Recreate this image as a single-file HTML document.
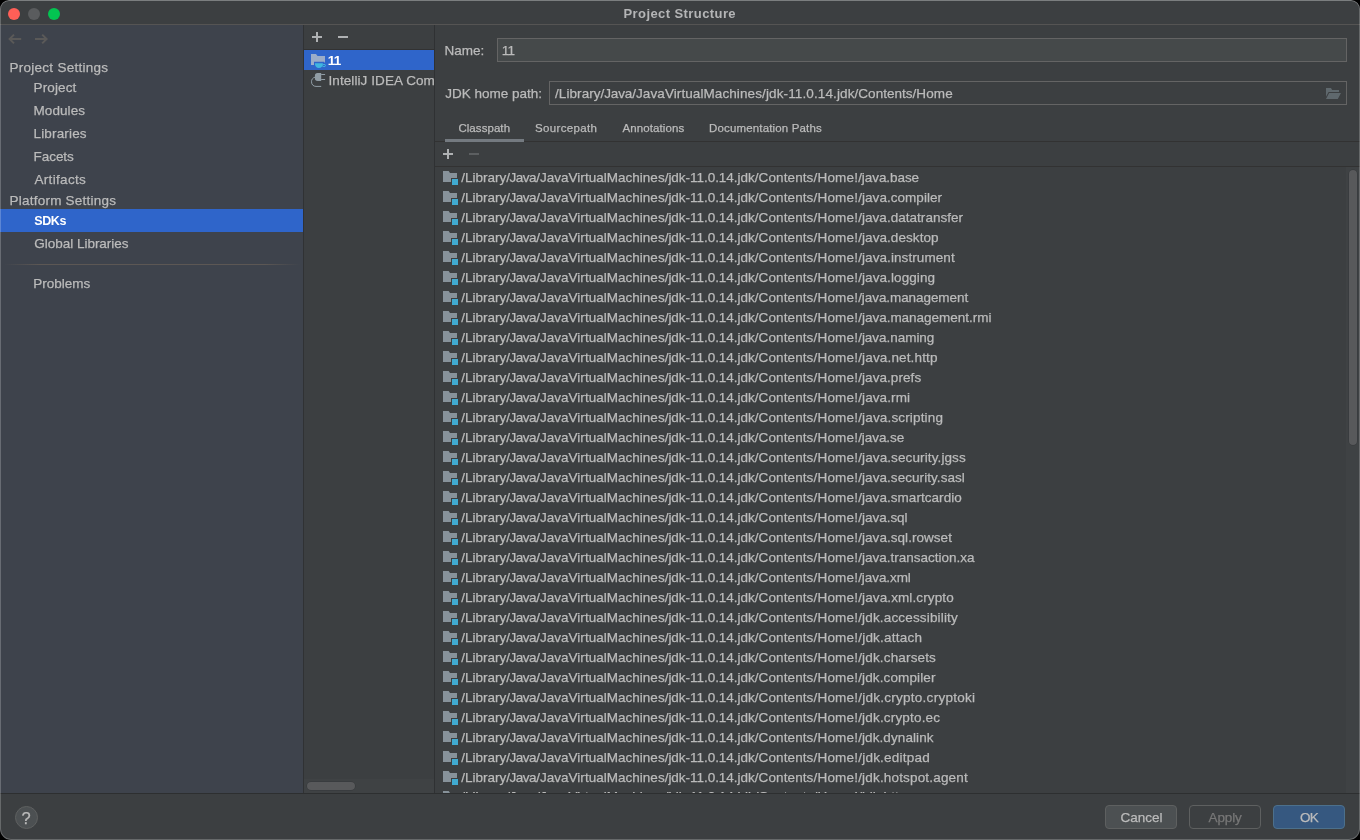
<!DOCTYPE html>
<html><head><meta charset="utf-8"><title>Project Structure</title>
<style>
*{box-sizing:border-box;margin:0;padding:0}
html,body{width:1360px;height:840px;overflow:hidden;background:#000}
body{font-family:"Liberation Sans",sans-serif;font-size:13.5px;color:#bbbbbb;position:relative;-webkit-text-stroke:.25px}
.win{position:absolute;left:0;top:0;width:1360px;height:840px;background:#3c3f41;border-radius:9px 9px 11px 11px;overflow:hidden;will-change:transform}
.abs{position:absolute}
.tx{position:absolute;white-space:pre;top:0}
.title{-webkit-text-stroke:0;font-size:13px;left:0;top:2px;width:1360px;height:23px;line-height:23px;font-weight:bold;color:#b4b5b6}
.tsep{left:0;top:24px;width:1360px;height:1px;background:#555453}
.dot{width:12px;height:12px;border-radius:50%;top:8px}
.sidebar{left:0;top:25px;width:304px;height:768px;background:#3e434c}
.sitem{left:0;width:304px;height:23px;line-height:23px}
.sel{background:#2f65ca;color:#fff}
.mid{left:304px;top:25px;width:130px;height:768px;background:#3c3f41;overflow:hidden}
.field{height:24px;border:1px solid #646464;line-height:22px;overflow:hidden}
.row{position:absolute;left:0;height:20px;width:900px;line-height:20px}
.fi{position:absolute;left:7px;top:2px;width:16px;height:16px}
.row span,.field span{position:absolute;top:1px;line-height:20px;white-space:pre}
.field span{top:1px;line-height:22px}
.last span{top:0}
.p0{left:26.2px;letter-spacing:-0.002px}
.p1{left:71.2px;letter-spacing:-0.456px}
.p2{left:101.2px;letter-spacing:0.021px}
.p3{left:229.7px;letter-spacing:-0.035px}
.p4{left:319.7px;letter-spacing:0.111px}
.p5{left:378.5px;letter-spacing:0.197px}
.f0{left:5.0px;letter-spacing:0.073px}
.f1{left:50.6px;letter-spacing:-0.136px}
.f2{left:82.2px;letter-spacing:0.086px}
.f3{left:212.0px;letter-spacing:0.127px}
.f4{left:304.6px;letter-spacing:0.011px}
.f5{left:362.5px;letter-spacing:0.100px}
.pm{left:423.2px}
.btn{top:805px;width:72px;height:24px;border-radius:4px;border:1px solid #5e6060;background:#4c5052;line-height:22px;color:#bbbbbb}
.btn .tx{top:1px}
.ic{position:absolute;width:16px;height:16px}
</style></head><body>
<svg width="0" height="0" style="position:absolute"><defs>
<g id="libf"><path fill="#9AA7B0" fill-opacity=".8" d="M9,9 L9,13 L1,13 L1,2 L6.696,2 L7.985,4 L15,4 L15,9 z"/><rect x="10" y="10" width="6" height="6" fill="#40B6E0" fill-opacity=".9"/></g>
<g id="plus"><rect x="7" y="3" width="2" height="10"/><rect x="3" y="7" width="10" height="2"/></g>
<g id="minus"><rect x="3" y="7" width="10" height="2"/></g>
</defs></svg>
<div class="win">
 <div class="abs title"><span class="tx" style="left:623.5px;letter-spacing:0.413px">Project Structure</span></div>
 <div class="abs tsep"></div>
 <div class="abs dot" style="left:8px;background:#ff5f57"></div>
 <div class="abs dot" style="left:28px;background:#5a5c5e"></div>
 <div class="abs dot" style="left:48px;background:#03c451"></div>

 <div class="abs sidebar">
  <svg class="abs" style="left:6px;top:6px" width="46" height="16" viewBox="0 0 46 16" fill="none" stroke="#5a5958" stroke-width="2"><path d="M15.2 8H3.5M8 3.6L3.6 8l4.4 4.4"/><path d="M29 8h11.7M36.2 3.6L40.6 8l-4.4 4.4"/></svg>
  <div class="abs sitem" style="top:31px"><span class="tx" style="left:9.5px;letter-spacing:0.267px">Project Settings</span></div>
  <div class="abs sitem" style="top:51px"><span class="tx" style="left:33.5px;letter-spacing:0.133px">Project</span></div>
  <div class="abs sitem" style="top:74px"><span class="tx" style="left:33.5px;letter-spacing:0.083px">Modules</span></div>
  <div class="abs sitem" style="top:97px"><span class="tx" style="left:33.5px;letter-spacing:0.162px">Libraries</span></div>
  <div class="abs sitem" style="top:120px"><span class="tx" style="left:33.5px;letter-spacing:-0.040px">Facets</span></div>
  <div class="abs sitem" style="top:143px"><span class="tx" style="left:34.5px;letter-spacing:0.312px">Artifacts</span></div>
  <div class="abs sitem" style="top:164px"><span class="tx" style="left:9.5px;letter-spacing:0.231px">Platform Settings</span></div>
  <div class="abs sitem sel" style="top:184px;font-weight:bold;font-size:12.5px;-webkit-text-stroke:0"><span class="tx" style="top:1px;left:34.3px;letter-spacing:-0.400px">SDKs</span></div>
  <div class="abs sitem" style="top:207px"><span class="tx" style="left:34.3px;letter-spacing:-0.020px">Global Libraries</span></div>
  <div class="abs" style="left:4px;top:239px;width:296px;height:1px;background:linear-gradient(90deg,rgba(92,87,84,0),#5c5754 12%,#5c5754 88%,rgba(92,87,84,0))"></div>
  <div class="abs sitem" style="top:247px"><span class="tx" style="left:33.3px;letter-spacing:0.000px">Problems</span></div>
 </div>
 <div class="abs" style="left:303px;top:25px;width:1px;height:768px;background:#303234"></div>
 <div class="abs mid">
  <svg class="ic" style="left:5px;top:4px" viewBox="0 0 16 16" fill="#afb1b3"><use href="#plus"/></svg>
  <svg class="ic" style="left:31px;top:4px" viewBox="0 0 16 16" fill="#afb1b3"><use href="#minus"/></svg>
  <div class="abs" style="left:0;top:24px;width:130px;height:1px;background:#323232"></div>
  <div class="abs sel" style="left:0;top:25px;width:130px;height:20px"></div>
  <svg class="ic" style="left:6px;top:27px" viewBox="0 0 16 16"><path fill="#9badc9" d="M1,2 L6,2 L7.5,4 L15,4 L15,10.6 L14.2,10.6 L14.2,9.8 L4,9.8 L4,13 L1,13 z"/><path fill="#40B6E0" d="M4.9,11.2 H12.9 C12.9,14.2 11.3,16 8.9,16 C6.5,16 4.9,14.2 4.9,11.2 z"/><ellipse cx="13.9" cy="13.5" rx="1.7" ry="1.05" fill="none" stroke="#40B6E0" stroke-width="1"/></svg>
  <div class="abs" style="left:0;top:26px;width:130px;height:20px;line-height:20px;color:#fff;font-weight:bold;-webkit-text-stroke:0"><span class="tx" style="left:23.8px;letter-spacing:-0.800px">11</span></div>
  <svg class="ic" style="left:6px;top:47px" viewBox="0 0 16 16" fill="none"><path fill="#9AA7B0" fill-opacity=".9" d="M7.6,1.1 h3.6 v7.9 h-3.6 a2.7,2.7 0 0 1 -2.7,-2.7 v-2.5 a2.7,2.7 0 0 1 2.7,-2.7 z"/><path stroke="#9AA7B0" stroke-opacity=".9" d="M11.2,2.5 h3.9 M11.2,7.5 h3.9"/><path stroke="#9AA7B0" stroke-opacity=".9" d="M5,5.2 C2.5,5.8 1.5,7.6 1.5,9.8 C1.5,12.6 3.4,14.4 6,14.4 L11.2,14.4"/></svg>
  <div class="abs" style="left:0;top:46px;width:130px;height:20px;line-height:20px"><span class="tx" style="left:24.5px;letter-spacing:0.081px">IntelliJ IDEA Community</span></div>
  <div class="abs" style="left:0;top:754px;width:130px;height:14px;background:#3f4244"></div>
  <div class="abs" style="left:3px;top:757px;width:48px;height:8px;border-radius:4px;background:#58595b;box-shadow:0 0 0 .5px #35373a"></div>
 </div>
 <div class="abs" style="left:434px;top:25px;width:1px;height:768px;background:#2f3133"></div>

 <div class="abs" style="left:0;top:39px;width:497px;height:24px;line-height:24px"><span class="tx" style="left:444.5px;letter-spacing:0.000px">Name:</span></div>
 <div class="abs field" style="left:497px;top:38px;width:850px;background:#45494a"><span style="left:3.8px;letter-spacing:-0.800px">11</span></div>
 <div class="abs" style="left:0;top:82px;width:549px;height:24px;line-height:24px"><span class="tx" style="left:445.3px;letter-spacing:-0.008px">JDK home path:</span></div>
 <div class="abs field" style="left:549px;top:81px;width:798px"><span class="f0">/Library</span><span class="f1">/Java</span><span class="f2">/JavaVirtualMachines</span><span class="f3">/jdk-11.0.14.jdk</span><span class="f4">/Contents</span><span class="f5">/Home</span></div>
 <svg class="ic" style="left:1325px;top:85px" viewBox="0 0 16 16"><path fill="#5f686d" d="M1,3 L6,3 L7.1,5 L14,5 L14,7 L3.6,7 L1,11.8 z M4.1,8 L16,8 L12.8,14 L1,14 z"/></svg>

 <div class="abs" style="left:0;top:117px;width:1360px;height:23px;line-height:23px;font-size:11.5px">
  <span class="tx" style="left:458.4px;letter-spacing:0.062px">Classpath</span>
  <span class="tx" style="left:534.9px;letter-spacing:0.367px">Sourcepath</span>
  <span class="tx" style="left:622.4px;letter-spacing:0.100px">Annotations</span>
  <span class="tx" style="left:709.0px;letter-spacing:0.156px">Documentation Paths</span>
 </div>
 <div class="abs" style="left:435px;top:141px;width:925px;height:1px;background:#323232"></div>
 <div class="abs" style="left:445px;top:139px;width:79px;height:3px;background:#747a80"></div>
 <svg class="ic" style="left:440px;top:146px" viewBox="0 0 16 16" fill="#afb1b3"><use href="#plus"/></svg>
 <svg class="ic" style="left:466px;top:146px" viewBox="0 0 16 16" fill="#5c5f61"><use href="#minus"/></svg>
 <div class="abs" style="left:435px;top:166px;width:925px;height:1px;background:#323232"></div>

 <div class="abs" id="list" style="left:435px;top:167px;width:925px;height:626px;overflow:hidden">
<div class="row" style="top:0px"><svg class="fi" viewBox="0 0 16 16"><use href="#libf"/></svg><span class="p0">/Library</span><span class="p1">/Java</span><span class="p2">/JavaVirtualMachines</span><span class="p3">/jdk-11.0.14.jdk</span><span class="p4">/Contents</span><span class="p5">/Home!</span><span class="pm" style="letter-spacing:-0.067px">/java.base</span></div>
<div class="row" style="top:20px"><svg class="fi" viewBox="0 0 16 16"><use href="#libf"/></svg><span class="p0">/Library</span><span class="p1">/Java</span><span class="p2">/JavaVirtualMachines</span><span class="p3">/jdk-11.0.14.jdk</span><span class="p4">/Contents</span><span class="p5">/Home!</span><span class="pm" style="letter-spacing:0.046px">/java.compiler</span></div>
<div class="row" style="top:40px"><svg class="fi" viewBox="0 0 16 16"><use href="#libf"/></svg><span class="p0">/Library</span><span class="p1">/Java</span><span class="p2">/JavaVirtualMachines</span><span class="p3">/jdk-11.0.14.jdk</span><span class="p4">/Contents</span><span class="p5">/Home!</span><span class="pm" style="letter-spacing:0.035px">/java.datatransfer</span></div>
<div class="row" style="top:60px"><svg class="fi" viewBox="0 0 16 16"><use href="#libf"/></svg><span class="p0">/Library</span><span class="p1">/Java</span><span class="p2">/JavaVirtualMachines</span><span class="p3">/jdk-11.0.14.jdk</span><span class="p4">/Contents</span><span class="p5">/Home!</span><span class="pm" style="letter-spacing:0.067px">/java.desktop</span></div>
<div class="row" style="top:80px"><svg class="fi" viewBox="0 0 16 16"><use href="#libf"/></svg><span class="p0">/Library</span><span class="p1">/Java</span><span class="p2">/JavaVirtualMachines</span><span class="p3">/jdk-11.0.14.jdk</span><span class="p4">/Contents</span><span class="p5">/Home!</span><span class="pm" style="letter-spacing:0.080px">/java.instrument</span></div>
<div class="row" style="top:100px"><svg class="fi" viewBox="0 0 16 16"><use href="#libf"/></svg><span class="p0">/Library</span><span class="p1">/Java</span><span class="p2">/JavaVirtualMachines</span><span class="p3">/jdk-11.0.14.jdk</span><span class="p4">/Contents</span><span class="p5">/Home!</span><span class="pm" style="letter-spacing:0.083px">/java.logging</span></div>
<div class="row" style="top:120px"><svg class="fi" viewBox="0 0 16 16"><use href="#libf"/></svg><span class="p0">/Library</span><span class="p1">/Java</span><span class="p2">/JavaVirtualMachines</span><span class="p3">/jdk-11.0.14.jdk</span><span class="p4">/Contents</span><span class="p5">/Home!</span><span class="pm" style="letter-spacing:-0.073px">/java.management</span></div>
<div class="row" style="top:140px"><svg class="fi" viewBox="0 0 16 16"><use href="#libf"/></svg><span class="p0">/Library</span><span class="p1">/Java</span><span class="p2">/JavaVirtualMachines</span><span class="p3">/jdk-11.0.14.jdk</span><span class="p4">/Contents</span><span class="p5">/Home!</span><span class="pm" style="letter-spacing:-0.011px">/java.management.rmi</span></div>
<div class="row" style="top:160px"><svg class="fi" viewBox="0 0 16 16"><use href="#libf"/></svg><span class="p0">/Library</span><span class="p1">/Java</span><span class="p2">/JavaVirtualMachines</span><span class="p3">/jdk-11.0.14.jdk</span><span class="p4">/Contents</span><span class="p5">/Home!</span><span class="pm" style="letter-spacing:-0.036px">/java.naming</span></div>
<div class="row" style="top:180px"><svg class="fi" viewBox="0 0 16 16"><use href="#libf"/></svg><span class="p0">/Library</span><span class="p1">/Java</span><span class="p2">/JavaVirtualMachines</span><span class="p3">/jdk-11.0.14.jdk</span><span class="p4">/Contents</span><span class="p5">/Home!</span><span class="pm" style="letter-spacing:0.154px">/java.net.http</span></div>
<div class="row" style="top:200px"><svg class="fi" viewBox="0 0 16 16"><use href="#libf"/></svg><span class="p0">/Library</span><span class="p1">/Java</span><span class="p2">/JavaVirtualMachines</span><span class="p3">/jdk-11.0.14.jdk</span><span class="p4">/Contents</span><span class="p5">/Home!</span><span class="pm" style="letter-spacing:0.070px">/java.prefs</span></div>
<div class="row" style="top:220px"><svg class="fi" viewBox="0 0 16 16"><use href="#libf"/></svg><span class="p0">/Library</span><span class="p1">/Java</span><span class="p2">/JavaVirtualMachines</span><span class="p3">/jdk-11.0.14.jdk</span><span class="p4">/Contents</span><span class="p5">/Home!</span><span class="pm" style="letter-spacing:0.100px">/java.rmi</span></div>
<div class="row" style="top:240px"><svg class="fi" viewBox="0 0 16 16"><use href="#libf"/></svg><span class="p0">/Library</span><span class="p1">/Java</span><span class="p2">/JavaVirtualMachines</span><span class="p3">/jdk-11.0.14.jdk</span><span class="p4">/Contents</span><span class="p5">/Home!</span><span class="pm" style="letter-spacing:0.157px">/java.scripting</span></div>
<div class="row" style="top:260px"><svg class="fi" viewBox="0 0 16 16"><use href="#libf"/></svg><span class="p0">/Library</span><span class="p1">/Java</span><span class="p2">/JavaVirtualMachines</span><span class="p3">/jdk-11.0.14.jdk</span><span class="p4">/Contents</span><span class="p5">/Home!</span><span class="pm" style="letter-spacing:-0.071px">/java.se</span></div>
<div class="row" style="top:280px"><svg class="fi" viewBox="0 0 16 16"><use href="#libf"/></svg><span class="p0">/Library</span><span class="p1">/Java</span><span class="p2">/JavaVirtualMachines</span><span class="p3">/jdk-11.0.14.jdk</span><span class="p4">/Contents</span><span class="p5">/Home!</span><span class="pm" style="letter-spacing:0.111px">/java.security.jgss</span></div>
<div class="row" style="top:300px"><svg class="fi" viewBox="0 0 16 16"><use href="#libf"/></svg><span class="p0">/Library</span><span class="p1">/Java</span><span class="p2">/JavaVirtualMachines</span><span class="p3">/jdk-11.0.14.jdk</span><span class="p4">/Contents</span><span class="p5">/Home!</span><span class="pm" style="letter-spacing:0.061px">/java.security.sasl</span></div>
<div class="row" style="top:320px"><svg class="fi" viewBox="0 0 16 16"><use href="#libf"/></svg><span class="p0">/Library</span><span class="p1">/Java</span><span class="p2">/JavaVirtualMachines</span><span class="p3">/jdk-11.0.14.jdk</span><span class="p4">/Contents</span><span class="p5">/Home!</span><span class="pm" style="letter-spacing:0.050px">/java.smartcardio</span></div>
<div class="row" style="top:340px"><svg class="fi" viewBox="0 0 16 16"><use href="#libf"/></svg><span class="p0">/Library</span><span class="p1">/Java</span><span class="p2">/JavaVirtualMachines</span><span class="p3">/jdk-11.0.14.jdk</span><span class="p4">/Contents</span><span class="p5">/Home!</span><span class="pm" style="letter-spacing:-0.013px">/java.sql</span></div>
<div class="row" style="top:360px"><svg class="fi" viewBox="0 0 16 16"><use href="#libf"/></svg><span class="p0">/Library</span><span class="p1">/Java</span><span class="p2">/JavaVirtualMachines</span><span class="p3">/jdk-11.0.14.jdk</span><span class="p4">/Contents</span><span class="p5">/Home!</span><span class="pm" style="letter-spacing:0.047px">/java.sql.rowset</span></div>
<div class="row" style="top:380px"><svg class="fi" viewBox="0 0 16 16"><use href="#libf"/></svg><span class="p0">/Library</span><span class="p1">/Java</span><span class="p2">/JavaVirtualMachines</span><span class="p3">/jdk-11.0.14.jdk</span><span class="p4">/Contents</span><span class="p5">/Home!</span><span class="pm" style="letter-spacing:0.000px">/java.transaction.xa</span></div>
<div class="row" style="top:400px"><svg class="fi" viewBox="0 0 16 16"><use href="#libf"/></svg><span class="p0">/Library</span><span class="p1">/Java</span><span class="p2">/JavaVirtualMachines</span><span class="p3">/jdk-11.0.14.jdk</span><span class="p4">/Contents</span><span class="p5">/Home!</span><span class="pm" style="letter-spacing:-0.075px">/java.xml</span></div>
<div class="row" style="top:420px"><svg class="fi" viewBox="0 0 16 16"><use href="#libf"/></svg><span class="p0">/Library</span><span class="p1">/Java</span><span class="p2">/JavaVirtualMachines</span><span class="p3">/jdk-11.0.14.jdk</span><span class="p4">/Contents</span><span class="p5">/Home!</span><span class="pm" style="letter-spacing:0.113px">/java.xml.crypto</span></div>
<div class="row" style="top:440px"><svg class="fi" viewBox="0 0 16 16"><use href="#libf"/></svg><span class="p0">/Library</span><span class="p1">/Java</span><span class="p2">/JavaVirtualMachines</span><span class="p3">/jdk-11.0.14.jdk</span><span class="p4">/Contents</span><span class="p5">/Home!</span><span class="pm" style="letter-spacing:0.165px">/jdk.accessibility</span></div>
<div class="row" style="top:460px"><svg class="fi" viewBox="0 0 16 16"><use href="#libf"/></svg><span class="p0">/Library</span><span class="p1">/Java</span><span class="p2">/JavaVirtualMachines</span><span class="p3">/jdk-11.0.14.jdk</span><span class="p4">/Contents</span><span class="p5">/Home!</span><span class="pm" style="letter-spacing:0.220px">/jdk.attach</span></div>
<div class="row" style="top:480px"><svg class="fi" viewBox="0 0 16 16"><use href="#libf"/></svg><span class="p0">/Library</span><span class="p1">/Java</span><span class="p2">/JavaVirtualMachines</span><span class="p3">/jdk-11.0.14.jdk</span><span class="p4">/Contents</span><span class="p5">/Home!</span><span class="pm" style="letter-spacing:0.158px">/jdk.charsets</span></div>
<div class="row" style="top:500px"><svg class="fi" viewBox="0 0 16 16"><use href="#libf"/></svg><span class="p0">/Library</span><span class="p1">/Java</span><span class="p2">/JavaVirtualMachines</span><span class="p3">/jdk-11.0.14.jdk</span><span class="p4">/Contents</span><span class="p5">/Home!</span><span class="pm" style="letter-spacing:0.125px">/jdk.compiler</span></div>
<div class="row" style="top:520px"><svg class="fi" viewBox="0 0 16 16"><use href="#libf"/></svg><span class="p0">/Library</span><span class="p1">/Java</span><span class="p2">/JavaVirtualMachines</span><span class="p3">/jdk-11.0.14.jdk</span><span class="p4">/Contents</span><span class="p5">/Home!</span><span class="pm" style="letter-spacing:0.263px">/jdk.crypto.cryptoki</span></div>
<div class="row" style="top:540px"><svg class="fi" viewBox="0 0 16 16"><use href="#libf"/></svg><span class="p0">/Library</span><span class="p1">/Java</span><span class="p2">/JavaVirtualMachines</span><span class="p3">/jdk-11.0.14.jdk</span><span class="p4">/Contents</span><span class="p5">/Home!</span><span class="pm" style="letter-spacing:0.177px">/jdk.crypto.ec</span></div>
<div class="row" style="top:560px"><svg class="fi" viewBox="0 0 16 16"><use href="#libf"/></svg><span class="p0">/Library</span><span class="p1">/Java</span><span class="p2">/JavaVirtualMachines</span><span class="p3">/jdk-11.0.14.jdk</span><span class="p4">/Contents</span><span class="p5">/Home!</span><span class="pm" style="letter-spacing:0.083px">/jdk.dynalink</span></div>
<div class="row" style="top:580px"><svg class="fi" viewBox="0 0 16 16"><use href="#libf"/></svg><span class="p0">/Library</span><span class="p1">/Java</span><span class="p2">/JavaVirtualMachines</span><span class="p3">/jdk-11.0.14.jdk</span><span class="p4">/Contents</span><span class="p5">/Home!</span><span class="pm" style="letter-spacing:0.227px">/jdk.editpad</span></div>
<div class="row" style="top:600px"><svg class="fi" viewBox="0 0 16 16"><use href="#libf"/></svg><span class="p0">/Library</span><span class="p1">/Java</span><span class="p2">/JavaVirtualMachines</span><span class="p3">/jdk-11.0.14.jdk</span><span class="p4">/Contents</span><span class="p5">/Home!</span><span class="pm" style="letter-spacing:0.171px">/jdk.hotspot.agent</span></div>
<div class="row last" style="top:620px"><svg class="fi" viewBox="0 0 16 16"><use href="#libf"/></svg><span class="p0">/Library</span><span class="p1">/Java</span><span class="p2">/JavaVirtualMachines</span><span class="p3">/jdk-11.0.14.jdk</span><span class="p4">/Contents</span><span class="p5">/Home!</span><span class="pm" style="letter-spacing:0.129px">/jdk.httpserver</span></div>
 </div>
 <div class="abs" style="left:1346px;top:167px;width:14px;height:626px;background:#3f4244"></div>
 <div class="abs" style="left:1349px;top:169.5px;width:8px;height:275px;border-radius:4px;background:#58595b;box-shadow:0 0 0 .5px #35373a"></div>

 <div class="abs" style="left:0;top:793px;width:1360px;height:1px;background:#2d2f30"></div>
 <div class="abs" style="left:14.5px;top:805.5px;width:23px;height:23px;border-radius:50%;background:#4c5052;border:1px solid #5e6060;text-align:center;line-height:22px;font-size:16.5px">?</div>
 <div class="abs btn" style="left:1105px"><span class="tx" style="left:14.5px;letter-spacing:0.020px">Cancel</span></div>
 <div class="abs btn" style="left:1189px;background:#3c3f41;color:#777"><span class="tx" style="left:18.6px;letter-spacing:-0.150px">Apply</span></div>
 <div class="abs btn" style="left:1273px;background:#365880;border-color:#4c708c"><span class="tx" style="left:26.1px;letter-spacing:-0.800px">OK</span></div>
 <div class="abs" style="left:0;top:0;width:1360px;height:840px;border-radius:9px 9px 11px 11px;box-shadow:inset 0 1px 0 0 rgba(255,255,255,.14),inset 0 0 0 1px rgba(255,255,255,.22);pointer-events:none"></div>
</div>
</body></html>
